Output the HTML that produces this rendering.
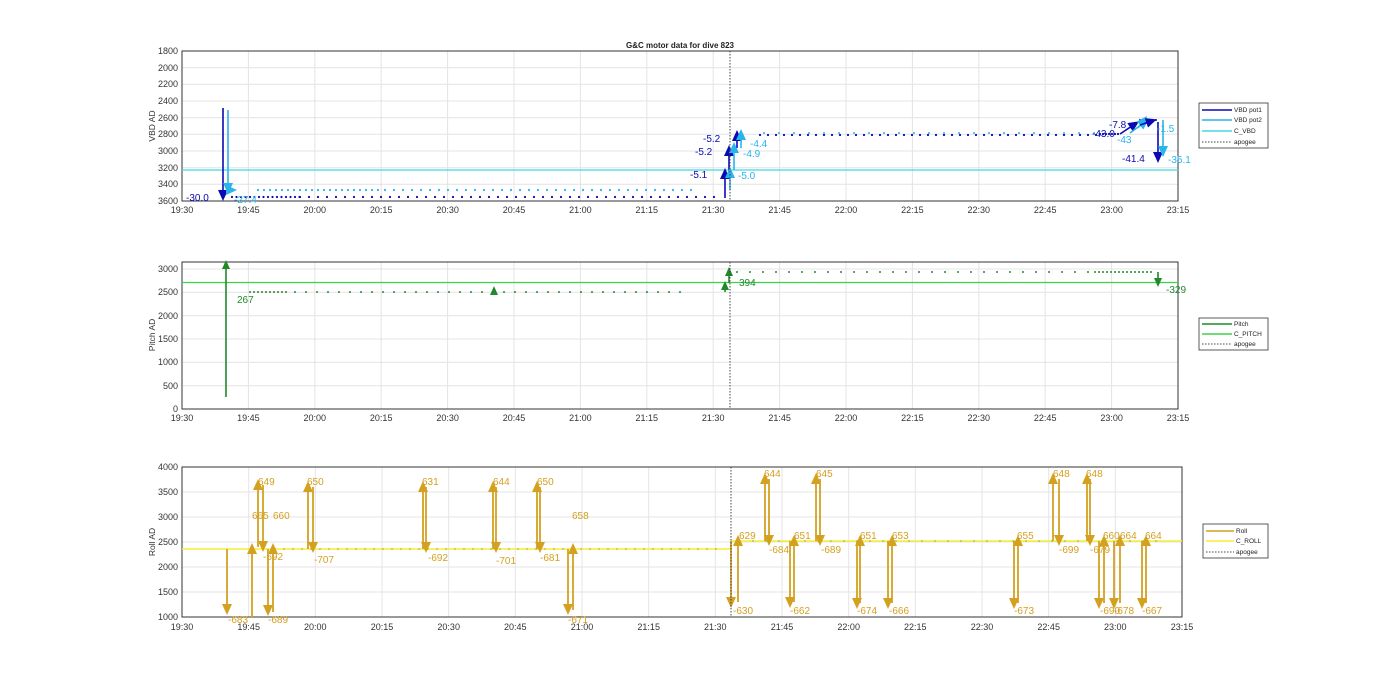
<!DOCTYPE html>
<html><head><meta charset="utf-8"><style>
html,body{margin:0;padding:0;background:#fff;width:1400px;height:693px;overflow:hidden}
svg{display:block;font-family:"Liberation Sans",sans-serif}
.t{font-size:9px;fill:#333}
.yl{font-size:8.5px;fill:#333}
.g{stroke:#e4e4e4;stroke-width:1}
.ax{fill:none;stroke:#333;stroke-width:1}
</style></head><body>
<svg width="1400" height="693" viewBox="0 0 1400 693" xmlns="http://www.w3.org/2000/svg">
<defs>
<marker id="mb" markerWidth="12" markerHeight="12" refX="6" refY="6" orient="auto" markerUnits="userSpaceOnUse"><path d="M0,1 L11,6 L0,11 Z" fill="#0a0ab4"/></marker>
<marker id="ml" markerWidth="12" markerHeight="12" refX="6" refY="6" orient="auto" markerUnits="userSpaceOnUse"><path d="M0,1 L11,6 L0,11 Z" fill="#2ab4ec"/></marker>
<marker id="mg" markerWidth="10" markerHeight="10" refX="5" refY="5" orient="auto" markerUnits="userSpaceOnUse"><path d="M0,1 L9,5 L0,9 Z" fill="#1f8a2a"/></marker>
<marker id="my" markerWidth="12" markerHeight="12" refX="6" refY="6" orient="auto" markerUnits="userSpaceOnUse"><path d="M0,1 L11,6 L0,11 Z" fill="#d4a020"/></marker>
</defs>

<text x="680" y="48" font-size="8" font-weight="bold" text-anchor="middle" fill="#222">G&amp;C motor data for dive 823</text>

<!-- ===== PLOT 1 ===== -->
<g>
<g class="g">
<line x1="248.4" y1="51" x2="248.4" y2="201"/><line x1="314.8" y1="51" x2="314.8" y2="201"/><line x1="381.2" y1="51" x2="381.2" y2="201"/><line x1="447.6" y1="51" x2="447.6" y2="201"/><line x1="514" y1="51" x2="514" y2="201"/><line x1="580.4" y1="51" x2="580.4" y2="201"/><line x1="646.8" y1="51" x2="646.8" y2="201"/><line x1="713.2" y1="51" x2="713.2" y2="201"/><line x1="779.6" y1="51" x2="779.6" y2="201"/><line x1="846" y1="51" x2="846" y2="201"/><line x1="912.4" y1="51" x2="912.4" y2="201"/><line x1="978.8" y1="51" x2="978.8" y2="201"/><line x1="1045.2" y1="51" x2="1045.2" y2="201"/><line x1="1111.6" y1="51" x2="1111.6" y2="201"/>
<line x1="182" y1="67.7" x2="1178" y2="67.7"/><line x1="182" y1="84.3" x2="1178" y2="84.3"/><line x1="182" y1="101" x2="1178" y2="101"/><line x1="182" y1="117.7" x2="1178" y2="117.7"/><line x1="182" y1="134.3" x2="1178" y2="134.3"/><line x1="182" y1="151" x2="1178" y2="151"/><line x1="182" y1="167.7" x2="1178" y2="167.7"/><line x1="182" y1="184.3" x2="1178" y2="184.3"/>
</g>
<rect x="182" y="51" width="996" height="150" class="ax"/>
<g class="t" text-anchor="end">
<text x="178" y="54">1800</text><text x="178" y="71">2000</text><text x="178" y="87">2200</text><text x="178" y="104">2400</text><text x="178" y="121">2600</text><text x="178" y="137">2800</text><text x="178" y="154">3000</text><text x="178" y="171">3200</text><text x="178" y="187">3400</text><text x="178" y="204">3600</text>
</g>
<g class="t" text-anchor="middle">
<text x="182" y="213">19:30</text><text x="248.4" y="213">19:45</text><text x="314.8" y="213">20:00</text><text x="381.2" y="213">20:15</text><text x="447.6" y="213">20:30</text><text x="514" y="213">20:45</text><text x="580.4" y="213">21:00</text><text x="646.8" y="213">21:15</text><text x="713.2" y="213">21:30</text><text x="779.6" y="213">21:45</text><text x="846" y="213">22:00</text><text x="912.4" y="213">22:15</text><text x="978.8" y="213">22:30</text><text x="1045.2" y="213">22:45</text><text x="1111.6" y="213">23:00</text><text x="1178" y="213">23:15</text>
</g>
<text class="yl" transform="translate(155,126) rotate(-90)" text-anchor="middle">VBD AD</text>
<line x1="182" y1="170" x2="1178" y2="170" stroke="#45d8e4" stroke-width="1.2"/>
<line x1="258" y1="190" x2="380" y2="190" stroke="#2ab4ec" stroke-width="2.2" stroke-linecap="round" stroke-dasharray="0 6"/>
<line x1="385" y1="190" x2="700" y2="190" stroke="#2ab4ec" stroke-width="2.2" stroke-linecap="round" stroke-dasharray="0 9"/>
<line x1="232" y1="197" x2="300" y2="197" stroke="#0a0ab4" stroke-width="2.2" stroke-linecap="round" stroke-dasharray="0 4.5"/>
<line x1="300" y1="197" x2="715" y2="197" stroke="#0a0ab4" stroke-width="2.2" stroke-linecap="round" stroke-dasharray="0 9"/>
<line x1="760" y1="135" x2="1100" y2="135" stroke="#0a0ab4" stroke-width="2.2" stroke-linecap="round" stroke-dasharray="0 8"/>
<line x1="764" y1="133" x2="1100" y2="133" stroke="#2ab4ec" stroke-width="2" stroke-linecap="round" stroke-dasharray="0 15"/>
<line x1="1100" y1="134" x2="1120" y2="134" stroke="#0a0ab4" stroke-width="2.2" stroke-linecap="round" stroke-dasharray="0 3"/>
<line x1="1140" y1="120" x2="1158" y2="120" stroke="#0a0ab4" stroke-width="2" stroke-linecap="round" stroke-dasharray="0 4"/>
<g stroke-width="1.6">
<line x1="223" y1="108" x2="223" y2="196" stroke="#0a0ab4" marker-end="url(#mb)"/>
<line x1="228" y1="110" x2="228" y2="189" stroke="#2ab4ec" marker-end="url(#ml)"/>
<line x1="230" y1="190" x2="232" y2="190" stroke="#2ab4ec" marker-end="url(#ml)"/>
<line x1="725" y1="198" x2="725" y2="173" stroke="#0a0ab4" marker-end="url(#mb)"/>
<line x1="729" y1="172" x2="729" y2="150" stroke="#0a0ab4" marker-end="url(#mb)"/>
<line x1="737" y1="148" x2="737" y2="135" stroke="#0a0ab4" marker-end="url(#mb)"/>
<line x1="730" y1="190" x2="730" y2="172" stroke="#2ab4ec" marker-end="url(#ml)"/>
<line x1="734" y1="170" x2="734" y2="147" stroke="#2ab4ec" marker-end="url(#ml)"/>
<line x1="741" y1="148" x2="741" y2="134" stroke="#2ab4ec" marker-end="url(#ml)"/>
<line x1="1158" y1="122" x2="1158" y2="158" stroke="#0a0ab4" marker-end="url(#mb)"/>
<line x1="1163" y1="120" x2="1163" y2="152" stroke="#2ab4ec" marker-end="url(#ml)"/>
<line x1="1120" y1="134" x2="1135" y2="124" stroke="#0a0ab4" marker-end="url(#mb)"/>
<line x1="1130" y1="133" x2="1145" y2="122" stroke="#2ab4ec" marker-end="url(#ml)"/>
<line x1="1138" y1="128" x2="1144" y2="120" stroke="#2ab4ec" marker-end="url(#ml)"/>
<line x1="1140" y1="125" x2="1152" y2="121" stroke="#0a0ab4" marker-end="url(#mb)"/>
</g>
<line x1="730" y1="51" x2="730" y2="201" stroke="#444" stroke-width="1" stroke-dasharray="1.5 1.5"/>
<g font-size="10">
<text x="186" y="201" fill="#0a0ab4">-30.0</text><text x="234" y="203" fill="#2ab4ec">-27.4</text>
<text x="690" y="178" fill="#0a0ab4">-5.1</text><text x="695" y="155" fill="#0a0ab4">-5.2</text><text x="703" y="142" fill="#0a0ab4">-5.2</text>
<text x="738" y="179" fill="#2ab4ec">-5.0</text><text x="743" y="157" fill="#2ab4ec">-4.9</text><text x="750" y="147" fill="#2ab4ec">-4.4</text>
<text x="1109" y="128" fill="#0a0ab4">-7.8</text><text x="1092" y="137" fill="#0a0ab4">-43.0</text><text x="1117" y="143" fill="#2ab4ec">-43</text>
<text x="1122" y="162" fill="#0a0ab4">-41.4</text><text x="1168" y="163" fill="#2ab4ec">-35.1</text><text x="1157" y="132" fill="#2ab4ec">-1.5</text>
</g>
<rect x="1199" y="103" width="69" height="45" fill="#fff" stroke="#333" stroke-width="0.8"/>
<g font-size="6.5" fill="#222">
<line x1="1202" y1="110" x2="1232" y2="110" stroke="#0a0ab4" stroke-width="1.5"/><text x="1234" y="112">VBD pot1</text>
<line x1="1202" y1="120" x2="1232" y2="120" stroke="#2ab4ec" stroke-width="1.5"/><text x="1234" y="122">VBD pot2</text>
<line x1="1202" y1="131" x2="1232" y2="131" stroke="#45d8e4" stroke-width="1.5"/><text x="1234" y="133">C_VBD</text>
<line x1="1202" y1="142" x2="1232" y2="142" stroke="#444" stroke-width="1" stroke-dasharray="1.5 1.5"/><text x="1234" y="144">apogee</text>
</g>
</g>

<!-- ===== PLOT 2 ===== -->
<g>
<g class="g">
<line x1="248.4" y1="262" x2="248.4" y2="409"/><line x1="314.8" y1="262" x2="314.8" y2="409"/><line x1="381.2" y1="262" x2="381.2" y2="409"/><line x1="447.6" y1="262" x2="447.6" y2="409"/><line x1="514" y1="262" x2="514" y2="409"/><line x1="580.4" y1="262" x2="580.4" y2="409"/><line x1="646.8" y1="262" x2="646.8" y2="409"/><line x1="713.2" y1="262" x2="713.2" y2="409"/><line x1="779.6" y1="262" x2="779.6" y2="409"/><line x1="846" y1="262" x2="846" y2="409"/><line x1="912.4" y1="262" x2="912.4" y2="409"/><line x1="978.8" y1="262" x2="978.8" y2="409"/><line x1="1045.2" y1="262" x2="1045.2" y2="409"/><line x1="1111.6" y1="262" x2="1111.6" y2="409"/>
<line x1="182" y1="269" x2="1178" y2="269"/><line x1="182" y1="292.3" x2="1178" y2="292.3"/><line x1="182" y1="315.7" x2="1178" y2="315.7"/><line x1="182" y1="339" x2="1178" y2="339"/><line x1="182" y1="362.3" x2="1178" y2="362.3"/><line x1="182" y1="385.7" x2="1178" y2="385.7"/>
</g>
<rect x="182" y="262" width="996" height="147" class="ax"/>
<g class="t" text-anchor="end">
<text x="178" y="272">3000</text><text x="178" y="295">2500</text><text x="178" y="319">2000</text><text x="178" y="342">1500</text><text x="178" y="365">1000</text><text x="178" y="389">500</text><text x="178" y="412">0</text>
</g>
<g class="t" text-anchor="middle">
<text x="182" y="421">19:30</text><text x="248.4" y="421">19:45</text><text x="314.8" y="421">20:00</text><text x="381.2" y="421">20:15</text><text x="447.6" y="421">20:30</text><text x="514" y="421">20:45</text><text x="580.4" y="421">21:00</text><text x="646.8" y="421">21:15</text><text x="713.2" y="421">21:30</text><text x="779.6" y="421">21:45</text><text x="846" y="421">22:00</text><text x="912.4" y="421">22:15</text><text x="978.8" y="421">22:30</text><text x="1045.2" y="421">22:45</text><text x="1111.6" y="421">23:00</text><text x="1178" y="421">23:15</text>
</g>
<text class="yl" transform="translate(155,335) rotate(-90)" text-anchor="middle">Pitch AD</text>
<line x1="182" y1="282.5" x2="1178" y2="282.5" stroke="#3fd14a" stroke-width="1.2"/>
<line x1="250" y1="292" x2="290" y2="292" stroke="#1f8a2a" stroke-width="2" stroke-linecap="round" stroke-dasharray="0 4"/>
<line x1="295" y1="292" x2="690" y2="292" stroke="#1f8a2a" stroke-width="2" stroke-linecap="round" stroke-dasharray="0 11"/>
<line x1="737" y1="272" x2="1090" y2="272" stroke="#1f8a2a" stroke-width="2" stroke-linecap="round" stroke-dasharray="0 13"/>
<line x1="1095" y1="272" x2="1155" y2="272" stroke="#1f8a2a" stroke-width="2" stroke-linecap="round" stroke-dasharray="0 4"/>
<g stroke="#1f8a2a" stroke-width="1.6">
<line x1="226" y1="397" x2="226" y2="264" marker-end="url(#mg)"/>
<line x1="494" y1="293" x2="494" y2="290" marker-end="url(#mg)"/>
<line x1="725" y1="292" x2="725" y2="285" marker-end="url(#mg)"/>
<line x1="729" y1="283" x2="729" y2="271" marker-end="url(#mg)"/>
<line x1="1158" y1="272" x2="1158" y2="283" marker-end="url(#mg)"/>
</g>
<line x1="730" y1="262" x2="730" y2="409" stroke="#444" stroke-width="1" stroke-dasharray="1.5 1.5"/>
<g font-size="10" fill="#1f8a2a"><text x="237" y="303">267</text><text x="739" y="286">394</text><text x="1166" y="293">-329</text></g>
<rect x="1199" y="318" width="69" height="32" fill="#fff" stroke="#333" stroke-width="0.8"/>
<g font-size="6.5" fill="#222">
<line x1="1202" y1="324" x2="1232" y2="324" stroke="#1f8a2a" stroke-width="1.5"/><text x="1234" y="326">Pitch</text>
<line x1="1202" y1="334" x2="1232" y2="334" stroke="#3fd14a" stroke-width="1.5"/><text x="1234" y="336">C_PITCH</text>
<line x1="1202" y1="344" x2="1232" y2="344" stroke="#444" stroke-width="1" stroke-dasharray="1.5 1.5"/><text x="1234" y="346">apogee</text>
</g>
</g>

<!-- ===== PLOT 3 ===== -->
<g>
<g class="g">
<line x1="248.7" y1="467" x2="248.7" y2="617"/><line x1="315.3" y1="467" x2="315.3" y2="617"/><line x1="382" y1="467" x2="382" y2="617"/><line x1="448.7" y1="467" x2="448.7" y2="617"/><line x1="515.3" y1="467" x2="515.3" y2="617"/><line x1="582" y1="467" x2="582" y2="617"/><line x1="648.7" y1="467" x2="648.7" y2="617"/><line x1="715.3" y1="467" x2="715.3" y2="617"/><line x1="782" y1="467" x2="782" y2="617"/><line x1="848.7" y1="467" x2="848.7" y2="617"/><line x1="915.3" y1="467" x2="915.3" y2="617"/><line x1="982" y1="467" x2="982" y2="617"/><line x1="1048.7" y1="467" x2="1048.7" y2="617"/><line x1="1115.3" y1="467" x2="1115.3" y2="617"/>
<line x1="182" y1="492" x2="1182" y2="492"/><line x1="182" y1="517" x2="1182" y2="517"/><line x1="182" y1="542" x2="1182" y2="542"/><line x1="182" y1="567" x2="1182" y2="567"/><line x1="182" y1="592" x2="1182" y2="592"/>
</g>
<rect x="182" y="467" width="1000" height="150" class="ax"/>
<g class="t" text-anchor="end">
<text x="178" y="470">4000</text><text x="178" y="495">3500</text><text x="178" y="520">3000</text><text x="178" y="545">2500</text><text x="178" y="570">2000</text><text x="178" y="595">1500</text><text x="178" y="620">1000</text>
</g>
<g class="t" text-anchor="middle">
<text x="182" y="630">19:30</text><text x="248.7" y="630">19:45</text><text x="315.3" y="630">20:00</text><text x="382" y="630">20:15</text><text x="448.7" y="630">20:30</text><text x="515.3" y="630">20:45</text><text x="582" y="630">21:00</text><text x="648.7" y="630">21:15</text><text x="715.3" y="630">21:30</text><text x="782" y="630">21:45</text><text x="848.7" y="630">22:00</text><text x="915.3" y="630">22:15</text><text x="982" y="630">22:30</text><text x="1048.7" y="630">22:45</text><text x="1115.3" y="630">23:00</text><text x="1182" y="630">23:15</text>
</g>
<text class="yl" transform="translate(155,542) rotate(-90)" text-anchor="middle">Roll AD</text>
<line x1="182" y1="549" x2="731" y2="549" stroke="#f5ee30" stroke-width="1.4"/>
<line x1="731" y1="541" x2="1182" y2="541" stroke="#f5ee30" stroke-width="1.4"/>
<line x1="275" y1="549" x2="720" y2="549" stroke="#a89a50" stroke-width="1.6" stroke-linecap="round" stroke-dasharray="0 9"/>
<line x1="740" y1="541" x2="1165" y2="541" stroke="#a89a50" stroke-width="1.6" stroke-linecap="round" stroke-dasharray="0 13"/>
<g stroke="#d4a020" stroke-width="1.8">
<line x1="227" y1="549" x2="227" y2="610" marker-end="url(#my)"/>
<line x1="252" y1="618" x2="252" y2="548" marker-end="url(#my)"/>
<line x1="258" y1="547" x2="258" y2="484" marker-end="url(#my)"/>
<line x1="263" y1="485" x2="263" y2="547" marker-end="url(#my)"/>
<line x1="268" y1="549" x2="268" y2="611" marker-end="url(#my)"/>
<line x1="273" y1="612" x2="273" y2="548" marker-end="url(#my)"/>
<line x1="308" y1="549" x2="308" y2="486" marker-end="url(#my)"/>
<line x1="313" y1="487" x2="313" y2="548" marker-end="url(#my)"/>
<line x1="423" y1="549" x2="423" y2="486" marker-end="url(#my)"/>
<line x1="426" y1="487" x2="426" y2="548" marker-end="url(#my)"/>
<line x1="493" y1="549" x2="493" y2="486" marker-end="url(#my)"/>
<line x1="496" y1="487" x2="496" y2="548" marker-end="url(#my)"/>
<line x1="537" y1="549" x2="537" y2="486" marker-end="url(#my)"/>
<line x1="540" y1="487" x2="540" y2="548" marker-end="url(#my)"/>
<line x1="568" y1="549" x2="568" y2="610" marker-end="url(#my)"/>
<line x1="573" y1="610" x2="573" y2="548" marker-end="url(#my)"/>
<line x1="731" y1="541" x2="731" y2="603" marker-end="url(#my)"/>
<line x1="738" y1="602" x2="738" y2="540" marker-end="url(#my)"/>
<line x1="765" y1="541" x2="765" y2="478" marker-end="url(#my)"/>
<line x1="769" y1="479" x2="769" y2="541" marker-end="url(#my)"/>
<line x1="790" y1="541" x2="790" y2="603" marker-end="url(#my)"/>
<line x1="794" y1="602" x2="794" y2="540" marker-end="url(#my)"/>
<line x1="816" y1="541" x2="816" y2="478" marker-end="url(#my)"/>
<line x1="820" y1="479" x2="820" y2="541" marker-end="url(#my)"/>
<line x1="857" y1="541" x2="857" y2="604" marker-end="url(#my)"/>
<line x1="860" y1="603" x2="860" y2="540" marker-end="url(#my)"/>
<line x1="888" y1="541" x2="888" y2="604" marker-end="url(#my)"/>
<line x1="892" y1="603" x2="892" y2="540" marker-end="url(#my)"/>
<line x1="1014" y1="541" x2="1014" y2="604" marker-end="url(#my)"/>
<line x1="1018" y1="603" x2="1018" y2="540" marker-end="url(#my)"/>
<line x1="1053" y1="541" x2="1053" y2="478" marker-end="url(#my)"/>
<line x1="1059" y1="479" x2="1059" y2="541" marker-end="url(#my)"/>
<line x1="1087" y1="541" x2="1087" y2="478" marker-end="url(#my)"/>
<line x1="1090" y1="479" x2="1090" y2="541" marker-end="url(#my)"/>
<line x1="1099" y1="541" x2="1099" y2="604" marker-end="url(#my)"/>
<line x1="1104" y1="603" x2="1104" y2="540" marker-end="url(#my)"/>
<line x1="1114" y1="541" x2="1114" y2="604" marker-end="url(#my)"/>
<line x1="1120" y1="603" x2="1120" y2="540" marker-end="url(#my)"/>
<line x1="1142" y1="541" x2="1142" y2="604" marker-end="url(#my)"/>
<line x1="1146" y1="603" x2="1146" y2="540" marker-end="url(#my)"/>
</g>
<line x1="731" y1="467" x2="731" y2="617" stroke="#444" stroke-width="1" stroke-dasharray="1.5 1.5"/>
<g font-size="10" fill="#d4a020">
<text x="228" y="623">-683</text><text x="252" y="519">665</text><text x="258" y="485">649</text><text x="263" y="560">-692</text><text x="268" y="623">-689</text><text x="273" y="519">660</text>
<text x="307" y="485">650</text><text x="314" y="563">-707</text><text x="422" y="485">631</text><text x="428" y="561">-692</text>
<text x="493" y="485">644</text><text x="496" y="564">-701</text><text x="537" y="485">650</text><text x="540" y="561">-681</text>
<text x="568" y="623">-671</text><text x="572" y="519">658</text>
<text x="733" y="614">-630</text><text x="739" y="539">629</text><text x="764" y="477">644</text><text x="769" y="553">-684</text>
<text x="790" y="614">-662</text><text x="794" y="539">651</text><text x="816" y="477">645</text><text x="821" y="553">-689</text>
<text x="857" y="614">-674</text><text x="860" y="539">651</text><text x="889" y="614">-666</text><text x="892" y="539">653</text>
<text x="1014" y="614">-673</text><text x="1017" y="539">655</text><text x="1053" y="477">648</text><text x="1059" y="553">-699</text>
<text x="1086" y="477">648</text><text x="1090" y="553">-679</text><text x="1100" y="614">-690</text><text x="1103" y="539">660</text>
<text x="1114" y="614">-678</text><text x="1120" y="539">664</text><text x="1142" y="614">-667</text><text x="1145" y="539">664</text>
</g>
<rect x="1203" y="524" width="65" height="34" fill="#fff" stroke="#333" stroke-width="0.8"/>
<g font-size="6.5" fill="#222">
<line x1="1206" y1="531" x2="1234" y2="531" stroke="#d4a020" stroke-width="1.5"/><text x="1236" y="533">Roll</text>
<line x1="1206" y1="541" x2="1234" y2="541" stroke="#f5ee30" stroke-width="1.5"/><text x="1236" y="543">C_ROLL</text>
<line x1="1206" y1="552" x2="1234" y2="552" stroke="#444" stroke-width="1" stroke-dasharray="1.5 1.5"/><text x="1236" y="554">apogee</text>
</g>
</g>
</svg>
</body></html>
